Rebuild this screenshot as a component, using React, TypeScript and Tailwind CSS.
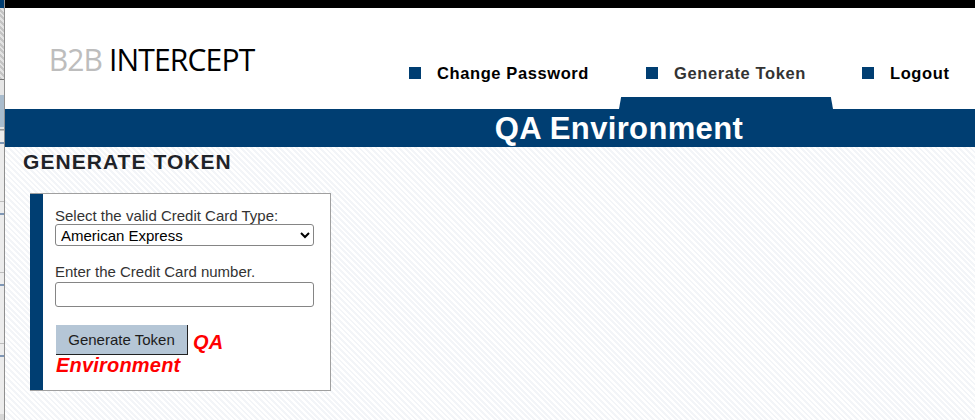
const NAV = [
  { label: 'Change Password', color: 'text-black', w: 'w-[237px]' },
  { label: 'Generate Token', color: 'text-[#333333]', w: 'w-[216px]' },
  { label: 'Logout', color: 'text-black', w: 'w-[104px]' },
];

function NavItem({ label, color, w }: { label: string; color: string; w: string }) {
  return (
    <div className={`flex items-center ${w}`}>
      <span className="w-3 h-3 bg-[#003e72] mr-4 shrink-0" />
      <span className={`text-[16.5px] font-bold tracking-[0.6px] whitespace-nowrap ${color}`}>{label}</span>
    </div>
  );
}

// Strip of the window behind, cut off at the left edge
function BehindStrip() {
  return (
    <div className="w-[5px] shrink-0 flex flex-col border-r border-[#8f8f8f] bg-[#d6d6d6]">
      <div className="h-[8px] bg-[#003e72]" />
      <div className="h-[72px] bg-[repeating-linear-gradient(45deg,#c4c4c4_0px,#c4c4c4_2px,#e2e2e2_2px,#e2e2e2_4px)] border-b border-[#777777]" />
      <div className="h-[15px] bg-[#e6e6e6]" />
      <div className="h-[32px] bg-[#a9bccd]" />
      <div className="h-[3px] bg-[#e6e6e6] border-b border-[#999999]" />
      {[0, 1, 2, 3].map((row) => (
        <div key={row} className="h-[71px] bg-[#ececec] border-t border-[#bdbdbd] pt-[11px]">
          <div className="h-[2px] w-[4px] bg-[#7f97b5]" />
        </div>
      ))}
    </div>
  );
}

export default function App() {
  return (
    <div className="flex w-[975px] h-[420px] overflow-hidden bg-white font-['Liberation_Sans',Arial,sans-serif]">
      <BehindStrip />

      <div className="flex-1 flex flex-col min-w-0">
        <div className="h-[8px] bg-black shrink-0" />

        {/* Header */}
        <header className="h-[101px] shrink-0 bg-white relative flex">
          <div className="pl-[45px] pt-[33px] text-[31px] leading-[36px] font-medium whitespace-nowrap font-['Open_Sans',sans-serif] tracking-[-0.9px] scale-x-[0.97] origin-left">
            <span className="text-[#bdbdbd]">B2B</span> <span className="text-black">INTERCEPT</span>
          </div>
          <nav className="absolute left-[404px] top-[53px] flex">
            {NAV.map((item) => (
              <NavItem key={item.label} {...item} />
            ))}
          </nav>
          <div className="absolute left-[614px] bottom-0 w-[214px] h-[12px] bg-[#003e72] [clip-path:polygon(1%_0,99%_0,100%_100%,0_100%)]" />
        </header>

        {/* Banner */}
        <div className="h-[38px] shrink-0 bg-[#003e72] flex items-center justify-center pl-[258px]">
          <span className="text-[31px] font-bold text-white leading-none tracking-[0.35px] whitespace-nowrap">QA Environment</span>
        </div>

        {/* Content */}
        <main className="flex-1 pl-[18px] bg-[repeating-linear-gradient(45deg,#ffffff_0px,#ffffff_2px,#f3f5f8_2px,#f3f5f8_4px)]">
          <h1 className="text-[21px] font-bold text-[#1f2328] leading-[24px] pt-[3px] tracking-[1.05px]">GENERATE TOKEN</h1>

          <div className="mt-[19px] ml-[7px] w-[301px] h-[198px] flex bg-white border border-[#a0a0a0] border-l-0">
            <div className="w-[13px] bg-[#003e72] shrink-0" />
            <div className="pl-[12px] pt-[14px] w-[272px] text-[#333333] text-[15px] leading-[16px]">
              <label className="block">Select the valid Credit Card Type:</label>
              <select defaultValue="American Express" className="block w-[259px] h-[22px] bg-white border border-[#858585] rounded-[3px] text-[15px] text-black pl-[1px]">
                <option>American Express</option>
              </select>
              <label className="block mt-[18px]">Enter the Credit Card number.</label>
              <input type="text" className="block w-[259px] h-[25px] mt-[2px] bg-white border border-[#858585] rounded-[3px]" />
              <div className="mt-[18px] pl-[1px] text-[20px] leading-[23px] font-bold italic text-[#ff0000] tracking-[0.2px]">
                <div className="flex items-end">
                  <button className="w-[132px] h-[30px] bg-[#b5c6d6] border-r border-b border-[#222222] text-[15px] font-normal not-italic tracking-normal text-[#1c1c1c]">
                    Generate Token
                  </button>
                  <span className="ml-[5px] relative top-[-1px]">QA</span>
                </div>
                <div className="mt-[-1px]">Environment</div>
              </div>
            </div>
          </div>
        </main>
      </div>
    </div>
  );
}
